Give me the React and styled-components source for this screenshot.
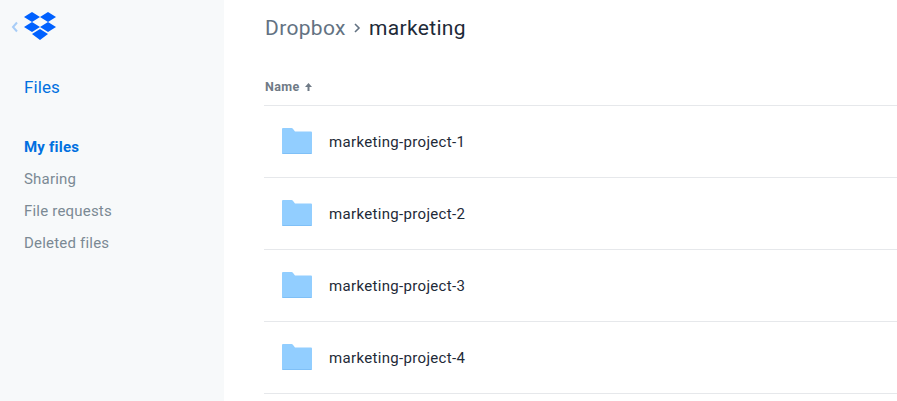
import React from "react";
import styled, { createGlobalStyle } from "styled-components";

const Global = createGlobalStyle`
  html, body { margin: 0; padding: 0; background: #fff; overflow: hidden; }
  body { font-family: Roboto, "Liberation Sans", sans-serif; }
`;

const Page = styled.div`
  display: flex;
  width: 897px;
  height: 401px;
  overflow: hidden;
`;

const Sidebar = styled.aside`
  width: 224px;
  flex: none;
  background: #f7f9fa;
  display: flex;
  flex-direction: column;
  padding-left: 24px;
  box-sizing: border-box;
`;

const LogoRow = styled.div`
  display: flex;
  align-items: center;
  height: 40px;
  margin-left: -13px;
  margin-top: 6px;
`;

const BackIcon = styled.svg`
  width: 8px;
  height: 12px;
  margin-right: 5px;
  margin-top: 2px;
`;

const Logo = styled.svg`
  width: 32px;
  height: 28px;
`;

const SectionTitle = styled.div`
  font-size: 17px;
  line-height: 20px;
  letter-spacing: 0.1px;
  color: #0070e0;
  margin-top: 31px;
  margin-bottom: 34px;
`;

const NavList = styled.nav`
  display: flex;
  flex-direction: column;
`;

const NavItem = styled.div`
  font-size: 15px;
  line-height: 32px;
  letter-spacing: 0.2px;
  font-weight: ${(p) => (p.$active ? 700 : 400)};
  color: ${(p) => (p.$active ? "#0070e0" : "#7b8994")};
`;

const Main = styled.main`
  flex: 1;
  padding-left: 40px;
  min-width: 0;
`;

const Breadcrumb = styled.div`
  display: flex;
  align-items: center;
  height: 55px;
  font-size: 21px;
  letter-spacing: 0.35px;
`;

const Crumb = styled.span`
  color: #637282;
  margin-left: 1px;
`;

const CrumbCurrent = styled.span`
  color: #1e2a38;
`;

const Chevron = styled.svg`
  width: 8px;
  height: 10px;
  margin: 0 8px 0 7px;
`;

const HeaderRow = styled.div`
  display: flex;
  align-items: center;
  height: 51px;
  padding-top: 12px;
  box-sizing: border-box;
  border-bottom: 1px solid #e6e8eb;
  font-size: 12.5px;
  font-weight: 700;
  letter-spacing: 0.4px;
  color: #6f7a86;
`;

const NameLabel = styled.span`
  margin-left: 1px;
`;

const SortIcon = styled.svg`
  width: 7px;
  height: 8px;
  margin-left: 5px;
  margin-top: 1px;
`;

const Row = styled.div`
  display: flex;
  align-items: center;
  height: 72px;
  box-sizing: border-box;
  border-bottom: 1px solid #e6e8eb;
  padding-left: 18px;
`;

const FolderIcon = styled.svg`
  width: 30px;
  height: 26px;
  flex: none;
  margin-right: 17px;
  margin-top: -1px;
`;

const RowName = styled.span`
  font-size: 15px;
  letter-spacing: 0.33px;
  color: #1e2a38;
`;

const rows = ["marketing-project-1", "marketing-project-2", "marketing-project-3", "marketing-project-4"];
const nav = ["My files", "Sharing", "File requests", "Deleted files"];

const Folder = () => (
  <FolderIcon viewBox="0 0 30 26">
    <path d="M0 1.2C0 .5.5 0 1.2 0H9.5c.7 0 1 .2 1.4.7L13 3.4h15.8c.7 0 1.2.5 1.2 1.2v20.2c0 .7-.5 1.2-1.2 1.2H1.2C.5 26 0 25.500 0 24.800z" fill="#92ceff" />
    <path d="M0 25c.2.6.6 1 1.200 1h27.600c.6 0 1-.4 1.200-1z" fill="#7fc0f7" />
  </FolderIcon>
);

export default function App() {
  return (
    <Page>
      <Global />
      <Sidebar>
        <LogoRow>
          <BackIcon viewBox="0 0 8 12">
            <path d="M6 1.5 2 6l4 4.5" fill="none" stroke="#a8cdf7" strokeWidth="2" />
          </BackIcon>
          <Logo viewBox="0 0 32 28">
            <path fill="#0061ff" d="M8 0 16 5 8 10 0 5zM24 0 32 5 24 10 16 5zM0 15 8 10 16 15 8 20zM24 10 32 15 24 20 16 15zM16 17 24 22 16 28 8 22z" />
          </Logo>
        </LogoRow>
        <SectionTitle>Files</SectionTitle>
        <NavList>
          {nav.map((n, i) => (
            <NavItem key={n} $active={i === 0}>{n}</NavItem>
          ))}
        </NavList>
      </Sidebar>
      <Main>
        <Breadcrumb>
          <Crumb>Dropbox</Crumb>
          <Chevron viewBox="0 0 8 10">
            <path d="M2 1l4 4-4 4" fill="none" stroke="#637282" strokeWidth="1.6" />
          </Chevron>
          <CrumbCurrent>marketing</CrumbCurrent>
        </Breadcrumb>
        <HeaderRow>
          <NameLabel>Name</NameLabel>
          <SortIcon viewBox="0 0 7 8">
            <path d="M3.5 0 7 4H4.5v4h-2V4H0z" fill="#6f7a86" />
          </SortIcon>
        </HeaderRow>
        {rows.map((r) => (
          <Row key={r}>
            <Folder />
            <RowName>{r}</RowName>
          </Row>
        ))}
      </Main>
    </Page>
  );
}
